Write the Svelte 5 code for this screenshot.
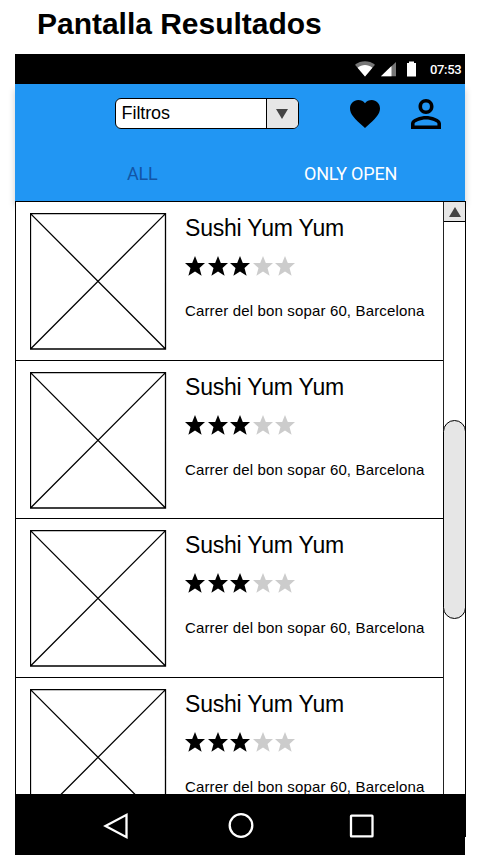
<script>
  const restaurants = Array.from({ length: 4 }, () => ({
    name: 'Sushi Yum Yum',
    rating: 3,
    address: 'Carrer del bon sopar 60, Barcelona'
  }));
  const stars = [1, 2, 3, 4, 5];
</script>

<main>
  <h1>Pantalla Resultados</h1>
  <div class="phone">
    <div class="status">
      <svg width="64" height="16" viewBox="0 0 64 16">
        <path d="M0 3.8C6 -.8 14 -.8 20 3.8L10 15.6Z" fill="#777" />
        <path d="M2.6 6.8C7 3.2 13 3.2 17.4 6.8L10 15.6Z" fill="#fff" />
        <path d="M26 15.3L41 1V15.3Z" fill="#777" />
        <path d="M26 15.3L36.5 5V15.3Z" fill="#fff" />
        <path d="M52 2h2V0.5h5V2h2v13.5h-9Z" fill="#fff" />
      </svg>
      <time>07:53</time>
    </div>
    <header>
      <div class="tools">
        <div class="select">
          <span>Filtros</span>
          <i><svg width="12" height="10" viewBox="0 0 12 10"><path d="M0 0h12L6 10Z" fill="#444" /></svg></i>
        </div>
        <svg class="heart" width="30" height="28" viewBox="2 3 20 18.35" preserveAspectRatio="none">
          <path d="M12 21.35l-1.45-1.32C5.4 15.36 2 12.28 2 8.5 2 5.42 4.42 3 7.5 3c1.74 0 3.41.81 4.5 2.09C13.09 3.81 14.76 3 16.5 3 19.58 3 22 5.42 22 8.5c0 3.78-3.4 6.86-8.55 11.54L12 21.35z" />
        </svg>
        <svg class="person" width="30" height="30" viewBox="4 4 16 16">
          <path d="M12 5.9a2.1 2.1 0 1 1 0 4.2 2.1 2.1 0 0 1 0-4.2m0 9c2.97 0 6.1 1.46 6.1 2.1v1.1H5.9V17c0-.64 3.13-2.1 6.1-2.1M12 4C9.79 4 8 5.79 8 8s1.79 4 4 4 4-1.79 4-4-1.79-4-4-4zm0 9c-2.67 0-8 1.34-8 4v3h16v-3c0-2.66-5.33-4-8-4z" />
        </svg>
      </div>
      <nav class="tabs">
        <span class="all">ALL</span>
        <span class="open">ONLY OPEN</span>
      </nav>
    </header>
    <div class="content">
      <div class="list">
        {#each restaurants as r}
          <article>
            <svg class="photo" width="137" height="137" viewBox="0 0 137 137" fill="none" stroke="#000" stroke-width="1.3">
              <path d="M.5 .6H135.5V136H.5ZM.5 .6L135.5 136M135.5 .6L.5 136" />
            </svg>
            <div class="info">
              <h2>{r.name}</h2>
              <div class="stars">
                {#each stars as n}
                  <svg width="20" height="20" viewBox="0 0 20 20">
                    <path d="M10 0L12.8 7H20L14.5 11.9L16.6 19.7L10 15.4L3.4 19.7L5.5 11.9L0 7H7.2Z" fill={n <= r.rating ? '#000' : '#ccc'} />
                  </svg>
                {/each}
              </div>
              <p>{r.address}</p>
            </div>
          </article>
        {/each}
      </div>
      <div class="scroll">
        <div class="up"><svg width="12" height="10" viewBox="0 0 12 10"><path d="M0 10h12L6 0Z" fill="#444" /></svg></div>
        <div class="thumb"></div>
      </div>
    </div>
    <footer>
      <svg width="450" height="61" viewBox="0 0 450 61" fill="none" stroke="#fff" stroke-width="2.3">
        <path d="M111.5 20.8V43.2L90.5 32Z" />
        <circle cx="226" cy="31.5" r="11.3" />
        <rect x="336" y="21.7" width="21.5" height="20.7" rx=".5" />
      </svg>
      <span class="edge"></span>
    </footer>
  </div>
</main>

<style>
  :global(body) { background: #fff; }
  main {
    width: 478px;
    height: 865px;
    overflow: hidden;
    font-family: "Liberation Sans", Arial, sans-serif;
    color: #000;
  }
  h1 {
    margin: 0;
    height: 53.5px;
    box-sizing: border-box;
    padding: 7px 0 0 37px;
    font-size: 30px;
    line-height: 34px;
    letter-spacing: -.02px;
    white-space: nowrap;
  }
  .phone { width: 450px; margin-left: 15px; }
  .status {
    height: 30px;
    box-sizing: border-box;
    background: #000;
    display: flex;
    padding: 7px 0 0 340px;
  }
  .status svg { flex: none; }
  time {
    margin-left: 11px;
    color: #fff;
    font: 500 13px/18px Roboto, sans-serif;
    letter-spacing: -.35px;
  }
  header {
    height: 117.5px;
    background: #2196f3;
    box-shadow: 0 5px 7px rgba(0, 0, 0, .2);
  }
  .tools { display: flex; height: 72px; align-items: flex-start; }
  .select {
    box-sizing: border-box;
    display: flex;
    width: 184px;
    height: 31px;
    margin: 14.5px 0 0 99.6px;
    border: 1.5px solid #000;
    border-radius: 6px;
    background: #fff;
    overflow: hidden;
  }
  .select span { flex: 1; padding-left: 6px; font-size: 18px; line-height: 28px; letter-spacing: -.1px; }
  .select i {
    width: 31px;
    border-left: 1px solid #000;
    background: #e6e6e6;
    display: flex;
    align-items: center;
    justify-content: center;
  }
  .heart { margin: 16px 0 0 51px; }
  .person { margin: 15px 0 0 31px; }
  .tabs { display: flex; font: 18px/36px Roboto, sans-serif; white-space: nowrap; letter-spacing: -.2px; }
  .all { width: 177px; padding-left: 112px; color: #1255a5; }
  .open { color: #fff; }
  .content {
    position: relative;
    box-sizing: border-box;
    width: 451px;
    height: 592.6px;
    border: solid #000;
    border-width: 1px 1px 0;
    background: #fff;
    display: flex;
    overflow: hidden;
  }
  .list { width: 427px; }
  article {
    box-sizing: border-box;
    height: 158.6px;
    padding: 11px 0 0 14px;
    border-bottom: 1.4px solid #000;
    display: flex;
  }
  .photo { flex: none; }
  .info { margin-left: 18px; white-space: nowrap; }
  h2 { margin: 1px 0 0; font-weight: 400; font-size: 23px; line-height: 28px; letter-spacing: -.2px; }
  .stars { display: flex; gap: 2.5px; margin-top: 14px; height: 22px; }
  p { margin: 23px 0 0; font-size: 15px; line-height: 20px; letter-spacing: .15px; }
  .scroll {
    box-sizing: border-box;
    width: 22px;
    border-left: 1px solid #222;
    display: flex;
    flex-direction: column;
    align-items: center;
  }
  .up {
    box-sizing: border-box;
    width: 22px;
    height: 20px;
    border-bottom: 1px solid #000;
    background: #e6e6e6;
    display: flex;
    align-items: center;
    justify-content: center;
  }
  .thumb {
    box-sizing: border-box;
    flex: none;
    width: 23px;
    height: 199px;
    margin-top: 198px;
    border: 1px solid #000;
    border-radius: 12px;
    background: #e6e6e6;
  }
  footer { position: relative; height: 61px; background: #000; }
  footer svg { display: block; }
  .edge { position: absolute; right: -1px; top: 0; width: 1px; height: 43px; background: #000; }
</style>
